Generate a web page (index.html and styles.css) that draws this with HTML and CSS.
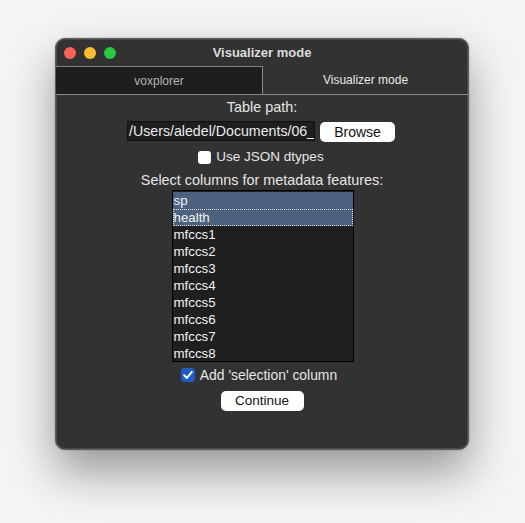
FILE: index.html
```html
<!DOCTYPE html>
<html>
<head>
<meta charset="utf-8">
<link rel="stylesheet" href="styles.css">
</head>
<body>
<div class="window">
  <div class="titlebar">
    <div class="lights">
      <span class="light red"></span>
      <span class="light yellow"></span>
      <span class="light green"></span>
    </div>
    <div class="title">Visualizer mode</div>
  </div>
  <div class="tabs">
    <div class="tab inactive">voxplorer</div>
    <div class="tab active">Visualizer mode</div>
  </div>
  <div class="content">
    <div class="label">Table path:</div>
    <div class="pathrow">
      <div class="entry">/Users/aledel/Documents/06_data/voxplorer/table.csv</div>
      <div class="button browse">Browse</div>
    </div>
    <div class="check-row first">
      <span class="checkbox"></span>
      <span class="check-label">Use JSON dtypes</span>
    </div>
    <div class="label second">Select columns for metadata features:</div>
    <div class="listbox">
      <div class="item selected">sp</div>
      <div class="item selected focus">health</div>
      <div class="item">mfccs1</div>
      <div class="item">mfccs2</div>
      <div class="item">mfccs3</div>
      <div class="item">mfccs4</div>
      <div class="item">mfccs5</div>
      <div class="item">mfccs6</div>
      <div class="item">mfccs7</div>
      <div class="item">mfccs8</div>
    </div>
    <div class="check-row second-check">
      <span class="checkbox checked">
        <svg width="14" height="14" viewBox="0 0 14 14"><path d="M3.2 7.2 L5.9 10 L10.8 3.8" fill="none" stroke="#fff" stroke-width="2" stroke-linecap="round" stroke-linejoin="round"/></svg>
      </span>
      <span class="check-label wide">Add 'selection' column</span>
    </div>
    <div class="button continue">Continue</div>
  </div>
</div>
</body>
</html>
```
FILE: styles.css
```css
html, body {
  margin: 0;
  padding: 0;
}
body {
  background: #f4f4f4;
  width: 525px;
  height: 523px;
  overflow: hidden;
  font-family: "Liberation Sans", Arial, sans-serif;
  font-size: 13px;
}
.window {
  margin-left: 55px;
  margin-top: 38px;
  width: 414px;
  height: 412px;
  box-sizing: border-box;
  background: #323232;
  border: 1px solid #5e5e5e;
  border-radius: 10px;
  box-shadow: inset 0 0 0 1px #8a8a8a44, 0 22px 45px rgba(0,0,0,0.38), 0 0 2px rgba(0,0,0,0.3);
  overflow: hidden;
  display: flex;
  flex-direction: column;
}
.titlebar {
  height: 27px;
  flex: none;
  display: flex;
  align-items: center;
  position: relative;
}
.lights {
  display: flex;
  gap: 8px;
  padding-left: 8px;
}
.light {
  width: 12px;
  height: 12px;
  border-radius: 50%;
  display: block;
}
.red { background: #fe5f57; }
.yellow { background: #febc2e; }
.green { background: #28c840; }
.title {
  position: absolute;
  left: 0;
  right: 0;
  top: 0;
  height: 27px;
  line-height: 27px;
  text-align: center;
  color: #dcdcdc;
  font-weight: bold;
  font-size: 13px;
  pointer-events: none;
}
.tabs {
  display: flex;
  flex: none;
  height: 29px;
  box-sizing: border-box;
  border-bottom: 1px solid #8a8a8a;
}
.tab {
  display: flex;
  align-items: center;
  justify-content: center;
  font-size: 12px;
  box-sizing: border-box;
}
.inactive {
  width: 207px;
  background: #1e1e1e;
  color: #b4b4b4;
  border-top: 1px solid #808080;
  border-right: 1px solid #8a8a8a;
}
.active {
  flex: 1;
  color: #e8e8e8;
}
.content {
  display: flex;
  flex-direction: column;
  align-items: center;
  color: #e6e6e6;
}
.label {
  height: 16px;
  line-height: 16px;
  margin-top: 4px;
  font-size: 14.4px;
  flex: none;
}
.label.second {
  margin-top: 7px;
}
.pathrow {
  display: flex;
  align-items: flex-start;
  gap: 5px;
  height: 21px;
  margin-top: 6px;
  margin-left: -2px;
  flex: none;
}
.entry {
  width: 188px;
  height: 20px;
  box-sizing: border-box;
  background: #1e1e1e;
  border: 1px solid #111;
  color: #ececec;
  line-height: 18px;
  padding-left: 1px;
  white-space: nowrap;
  overflow: hidden;
  font-size: 14.2px;
}
.button {
  background: #ffffff;
  color: #111;
  height: 20px;
  line-height: 20px;
  text-align: center;
  border-radius: 5px;
  box-sizing: border-box;
  font-size: 13.5px;
  flex: none;
}
.browse {
  width: 75px;
  margin-top: 1px;
  font-size: 14px;
}
.check-row {
  display: flex;
  align-items: center;
  gap: 5px;
  height: 16px;
  flex: none;
}
.check-row.first {
  margin-top: 7px;
  margin-left: -2px;
}
.check-label {
  font-size: 13.5px;
  line-height: 16px;
}
.check-label.wide {
  font-size: 13.9px;
}
.checkbox {
  width: 13px;
  height: 13px;
  border-radius: 3px;
  background: #fff;
  display: flex;
  align-items: center;
  justify-content: center;
}
.checkbox.checked {
  width: 14px;
  height: 14px;
  background: #1e5cc0;
}
.listbox {
  margin-top: 2px;
  width: 182px;
  height: 172px;
  flex: none;
  box-sizing: border-box;
  background: #1f1f1f;
  border: 1px solid #000;
  padding-top: 1px;
  margin-left: 1px;
}
.item {
  height: 17px;
  line-height: 17px;
  padding-left: 1px;
  color: #f2f2f2;
  box-sizing: border-box;
  font-size: 13.3px;
}
.item.selected {
  background: #4b617e;
}
.item.focus {
  outline: 1px dotted #e0e0e0;
  outline-offset: -1px;
}
.check-row.second-check {
  margin-top: 5px;
  margin-left: -6px;
}
.continue {
  width: 83px;
  margin-top: 8px;
}
```
